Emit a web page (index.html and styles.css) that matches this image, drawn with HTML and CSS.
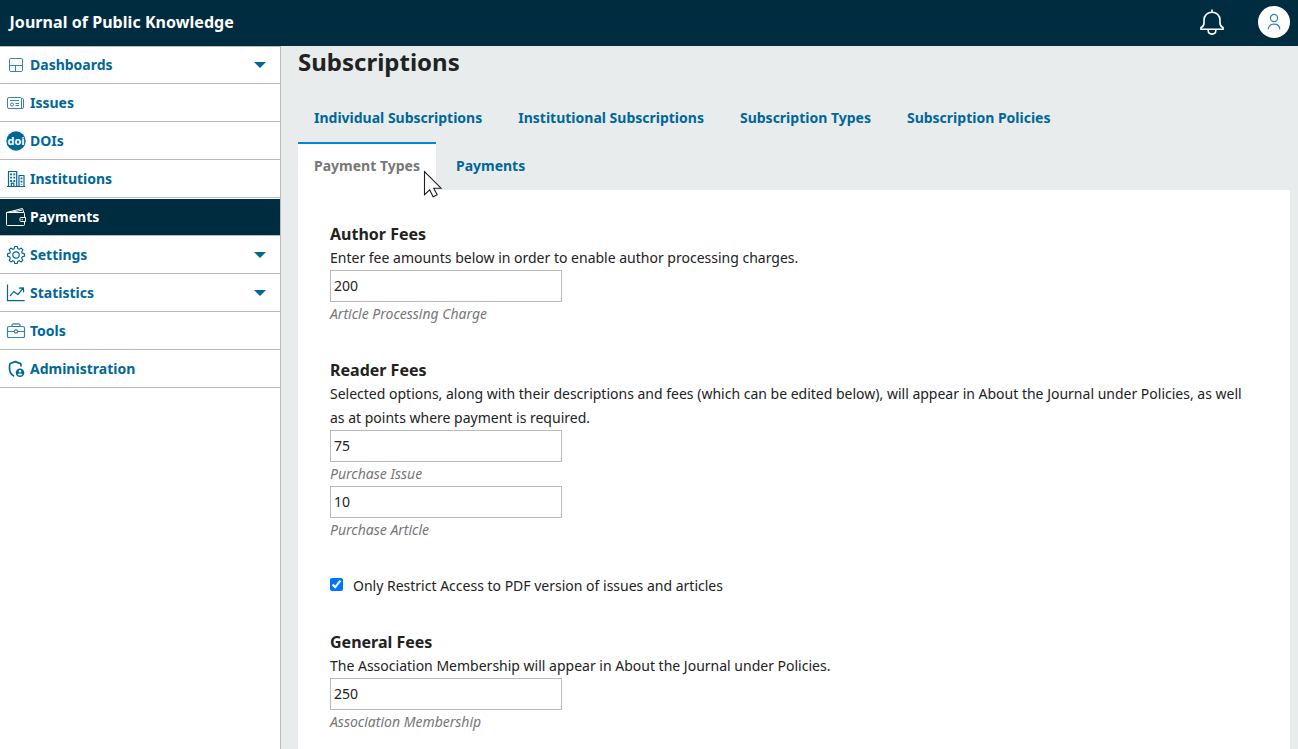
FILE: index.html
```html
<!DOCTYPE html>
<html lang="en">
<head>
<meta charset="utf-8">
<title>Subscriptions</title>
<link rel="stylesheet" href="styles.css">
</head>
<body>
<header class="topbar">
  <div class="journal">Journal of Public Knowledge</div>
  <div class="actions">
    <svg class="bell" width="24" height="26" viewBox="0 0 24 26" fill="none" stroke="#fff" stroke-width="1.6"><path d="M12 .5V3M1 20.2v-1.6c2.2-.9 3-2.3 3-4.600V11C4 6.500 7.500 3.200 12 3.200S20 6.500 20 11v3c0 2.300.8 3.700 3 4.600v1.600zM8.200 20.500v1c0 2.200 1.700 3.600 3.800 3.600s3.800-1.400 3.800-3.600v-1"/></svg>
    <span class="avatar"><svg width="16" height="18" viewBox="0 0 16 18" fill="none" stroke="#2e85b2" stroke-width="1.200"><circle cx="8" cy="5" r="3.600"/><path d="M2.200 16.500c0-3.300 2.300-5.300 5.800-5.300s5.800 2 5.800 5.300"/></svg></span>
  </div>
</header>
<div class="shell">
  <nav class="nav">
    <a class="item"><svg class="icon soft" viewBox="0 0 20 20"><path class="thin" d="M4.800 3.500h10.400a1.300 1.300 0 0 1 1.300 1.300v10.400a1.300 1.300 0 0 1-1.300 1.300H4.800a1.300 1.300 0 0 1-1.300-1.300V4.800a1.300 1.300 0 0 1 1.300-1.300zM3.500 10.500h13M9.500 10.500v6"/></svg><span>Dashboards</span><i class="caret"></i></a>
    <a class="item"><svg class="icon soft" viewBox="0 0 20 20"><path class="thin" d="M3 4.500h11.500a1 1 0 0 1 1 1v10H3a1.500 1.500 0 0 1-1.500-1.500V6A1.500 1.500 0 0 1 3 4.500zM15.500 5.500h1a1 1 0 0 1 1 1v7.500a1.500 1.500 0 0 1-1.500 1.500h-1M4 7.500h9M9.500 10.500h3.500M9.500 12.500h3.500"/><circle class="thin" cx="6" cy="11.600" r="1.500"/></svg><span>Issues</span></a>
    <a class="item"><svg class="icon" viewBox="0 0 20 20"><circle cx="10" cy="10" r="9.700" fill="#006798"/><text class="doi" x="10" y="14" text-anchor="middle">doi</text></svg><span>DOIs</span></a>
    <a class="item"><svg class="icon" viewBox="0 0 20 20"><path class="mid" d="M2.500 17.500v-15h8.200v15M13 17.500v-11h5v11M1 17.500H19M5.300 17.500v-3.300h2.600v3.300"/><path class="windows" d="M5 4.500v8.600M8.300 4.500v8.600M15.500 8.500v7"/></svg><span>Institutions</span></a>
    <a class="item current"><svg class="icon" viewBox="0 0 20 20"><path class="thin" d="M.5 5.500v12a1 1 0 0 0 1 1h16a1 1 0 0 0 1-1v-3.300M18.500 10.500v-4a1 1 0 0 0-1-1H.5L16.500 1.500l1.300 4M4 5.500l12-2.300M19.500 10.500h-4.700a.8.8 0 0 0-.8.8v2.400a.8.8 0 0 0 .8.800h4.700z"/><circle cx="16.200" cy="12.500" r=".7" fill="currentColor"/></svg><span>Payments</span></a>
    <a class="item"><svg class="icon" viewBox="0 0 20 20"><path class="mid" d="M8.200 3.700 8.800 1.500h2.400l.6 2.200 1.400.6 2-1.200 1.700 1.700-1.200 2 .6 1.400 2.200.6v2.400l-2.200.6-.6 1.400 1.200 2-1.700 1.700-2-1.200-1.400.6-.6 2.200H8.800l-.6-2.200-1.400-.6-2 1.200-1.700-1.700 1.200-2-.6-1.400-2.200-.6V8.800l2.200-.6.6-1.400-1.200-2 1.700-1.700 2 1.200z"/><circle class="mid" cx="10" cy="10" r="3.200"/></svg><span>Settings</span><i class="caret"></i></a>
    <a class="item"><svg class="icon" viewBox="0 0 20 20"><path class="mid" d="M1.500 1.500v16.200H18.700M4 13.200l3.700-4.700 4.200 3 5.300-6.300M12.800 5.100l4.600-.2.200 4.500"/></svg><span>Statistics</span><i class="caret"></i></a>
    <a class="item"><svg class="icon soft" viewBox="0 0 20 20"><path class="mid" d="M3 5.500h14a1.500 1.500 0 0 1 1.500 1.500v8.500a1 1 0 0 1-1 1h-15a1 1 0 0 1-1-1V7A1.500 1.500 0 0 1 3 5.500zM6 5.500V4.300A1.500 1.500 0 0 1 7.500 2.800h5A1.500 1.500 0 0 1 14 4.300v1.200M1.500 10.500h6.700M11.800 10.500h6.700"/><circle class="mid" cx="10" cy="10.500" r="1.700"/></svg><span>Tools</span></a>
    <a class="item"><svg class="icon" viewBox="0 0 20 20"><path class="thick" d="M8 17.200C4.600 15.300 3.200 12.300 3.500 8c.1-1.600.3-2.700.6-3.500L9.200 2.600l5.400 2c.3.800.5 1.900.5 3"/><circle cx="14" cy="13.800" r="4.300" fill="#006798"/><circle cx="14" cy="12.200" r="1.200" fill="#fff"/><path d="M11.600 15.500c.5-1.200 4.300-1.200 4.800 0-.8 1.300-4 1.300-4.800 0z" fill="#fff"/></svg><span>Administration</span></a>
  </nav>
  <main class="main">
    <h1>Subscriptions</h1>
    <div class="tabs">
      <a class="tab">Individual Subscriptions</a>
      <a class="tab">Institutional Subscriptions</a>
      <a class="tab">Subscription Types</a>
      <a class="tab">Subscription Policies</a>
      <a class="tab active">Payment Types</a>
      <a class="tab">Payments</a>
    </div>
    <form class="panel">
      <section class="group">
        <h2>Author Fees</h2>
        <p>Enter fee amounts below in order to enable author processing charges.</p>
        <input class="field" type="text" value="200">
        <label class="hint">Article Processing Charge</label>
      </section>
      <section class="group">
        <h2>Reader Fees</h2>
        <p>Selected options, along with their descriptions and fees (which can be edited below), will appear in About the Journal under Policies, as well as at points where payment is required.</p>
        <input class="field" type="text" value="75">
        <label class="hint">Purchase Issue</label>
        <input class="field" type="text" value="10">
        <label class="hint">Purchase Article</label>
      </section>
      <label class="group check"><input type="checkbox" checked><span>Only Restrict Access to PDF version of issues and articles</span></label>
      <section class="group">
        <h2>General Fees</h2>
        <p>The Association Membership will appear in About the Journal under Policies.</p>
        <input class="field" type="text" value="250">
        <label class="hint">Association Membership</label>
      </section>
    </form>
  </main>
</div>
<svg class="pointer" width="20" height="28" viewBox="0 0 20 28"><path d="M1.500 1.500v23.200l5.200-4.800 3.400 6.800 4.100-1.900-3.500-6.600h7.300z" fill="#fff" stroke="#1c1c28" stroke-width="1.100"/></svg>
</body>
</html>
```
FILE: styles.css
```css
* { box-sizing: border-box; }
body {
  margin: 0;
  height: 749px;
  overflow: hidden;
  background: #e8eced;
  color: #222;
  font: 14px/24px "Noto Sans", sans-serif;
}
.topbar {
  display: flex;
  align-items: center;
  justify-content: space-between;
  height: 46px;
  padding: 0 8px 2px 9.500px;
  background: #002c40;
  color: #fff;
}
.journal { font-size: 16px; font-weight: 700; letter-spacing: .05px; }
.actions { display: flex; align-items: center; gap: 34px; }
.bell { display: block; }
.avatar {
  display: flex;
  align-items: center;
  justify-content: center;
  width: 32px;
  height: 32px;
  border-radius: 50%;
  background: #fff;
}
.shell { display: flex; height: 703px; }
.nav {
  flex: none;
  width: 281px;
  border-top: 1px solid #bbb;
  border-right: 1px solid #bbb;
  background: #fff;
}
.item {
  display: flex;
  align-items: center;
  gap: 4px;
  height: 38px;
  padding: 1px 14px 0 6px;
  border-bottom: 1px solid #bbb;
  color: #006798;
  font-weight: 700;
}
.item:first-child { height: 37px; padding-top: 0; }
.current { border-top: 1px solid #fff; padding-top: 0; background: #002c40; color: #fff; }
.icon { width: 20px; height: 20px; fill: none; stroke-linejoin: round; }
.soft { opacity: .8; }
.thin, .mid, .windows, .thick { stroke: currentColor; }
.thin { stroke-width: 1; }
.mid { stroke-width: 1.2; }
.thick { stroke-width: 1.700; }
.windows { stroke-width: 1.800; stroke-dasharray: 1.800 1.500; }
.doi { fill: #fff; font: 700 11px "Open Sans", sans-serif; }
.caret {
  margin-left: auto;
  border: 6px solid transparent;
  border-top-color: #006798;
  border-bottom: 0;
}
.main { flex: 1; min-width: 0; padding: 0 8px 0 17px; }
h1 { margin: 0; height: 48px; font-size: 24px; line-height: 32px; }
.tabs { display: flex; flex-wrap: wrap; column-gap: 4px; padding-right: 96px; }
.tab {
  height: 48px;
  padding: 10px 16px;
  border-top: 2px solid transparent;
  color: #006798;
  font-weight: 700;
}
.active { border-color: #008acb; background: #fff; color: #777; }
.panel { height: 559px; padding: 32px; background: #fff; overflow: hidden; }
.group { display: block; margin-bottom: 32px; }
h2 { margin: 0; font-size: 16px; line-height: 24px; }
p { margin: 0; }
.field {
  display: block;
  width: 232px;
  height: 32px;
  padding: 0 3px 2px;
  border: 1px solid #bbb;
  border-radius: 0;
  background: #fff;
  color: #222;
  font: inherit;
}
.hint { display: block; color: #777; font-style: italic; }
.check { display: flex; gap: 10px; }
.check input { width: 13px; height: 13px; margin: 4px 0 0; }
.pointer { position: absolute; left: 423px; top: 170px; }
```
